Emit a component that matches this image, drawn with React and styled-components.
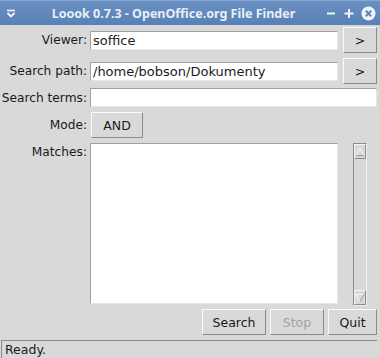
import React from 'react';
import styled, { createGlobalStyle } from 'styled-components';

const Global = createGlobalStyle`
  html, body { margin: 0; padding: 0; background: #d9d9d9; }
  body { font-family: "DejaVu Sans", sans-serif; font-size: 12px; color: #1a1a1a; }
`;

const Window = styled.div`
  width: 380px;
  height: 358px;
  display: flex;
  flex-direction: column;
  background: #d9d9d9;
  overflow: hidden;
`;

const TitleBar = styled.div`
  height: 25px;
  flex: none;
  display: flex;
  align-items: center;
  background: linear-gradient(#6b90c2, #5781b6);
  border-top: 1px solid #87a6d0;
  box-sizing: border-box;
  padding: 0 4px 0 4px;
`;

const Title = styled.div`
  flex: 1;
  text-align: center;
  color: #e9eef6;
  font-family: "Noto Sans", sans-serif;
  font-weight: 700;
  font-size: 12.5px;
  padding-left: 4px;
`;

const TitleIcons = styled.div`
  display: flex;
  align-items: center;
  gap: 6px;
`;

const Body = styled.div`
  flex: 1;
  display: flex;
  flex-direction: column;
  padding: 2px 3px 0 0;
`;

const Row = styled.div`
  display: flex;
  align-items: center;
  height: ${p => p.h}px;
  margin-bottom: ${p => p.mb || 0}px;
`;

const Label = styled.div`
  width: 90px;
  flex: none;
  text-align: right;
  padding-right: 3px;
  box-sizing: border-box;
  font-size: 12.2px;
  white-space: nowrap;
  align-self: ${p => (p.top ? 'flex-start' : 'center')};
  margin-top: ${p => (p.top ? 2 : 0)}px;
`;

const Entry = styled.div`
  flex: 1;
  height: 19px;
  box-sizing: border-box;
  background: #fff;
  border: 1px solid #a0a0a0;
  border-right-color: #e6e6e6;
  border-bottom-color: #e6e6e6;
  padding: 1px 2px;
  font-size: 13px;
  line-height: 16px;
  white-space: nowrap;
  overflow: hidden;
`;

const Button = styled.div`
  flex: none;
  width: ${p => p.w}px;
  height: 26px;
  box-sizing: border-box;
  display: flex;
  align-items: center;
  justify-content: center;
  border: 1px solid #8a8a8a;
  border-top-color: #fafafa;
  border-left-color: #fafafa;
  background: #d9d9d9;
  color: ${p => (p.disabled ? '#a3a3a3' : '#1a1a1a')};
  font-size: 12.5px;
  margin-left: ${p => p.ml || 0}px;
`;

const MatchesRow = styled.div`
  display: flex;
  height: 163px;
  margin-bottom: 3px;
`;

const ListBox = styled.div`
  width: 248px;
  height: 161px;
  box-sizing: border-box;
  background: #fff;
  border: 1px solid #a0a0a0;
  border-right-color: #e6e6e6;
  border-bottom-color: #e6e6e6;
`;

const ScrollBar = styled.div`
  width: 14px;
  height: 163px;
  margin-left: 15px;
  box-sizing: border-box;
  border: 1px solid #8a8a8a;
  border-bottom-color: #f2f2f2;
  border-right-color: #f2f2f2;
  display: flex;
  flex-direction: column;
  justify-content: space-between;
`;

const Arrow = styled.div`
  height: 13px;
  display: flex;
  align-items: center;
  justify-content: center;
  border: 1px solid #f4f4f4;
  border-right-color: #8a8a8a;
  border-bottom-color: #8a8a8a;
`;

const Buttons = styled.div`
  display: flex;
  justify-content: flex-end;
  gap: 4px;
  height: 27px;
`;

const Status = styled.div`
  margin-top: 4px;
  height: 18px;
  box-sizing: border-box;
  border: 1px solid #8a8a8a;
  border-right: none;
  border-bottom: none;
  margin-left: 1px;
  padding: 1px 0 0 3px;
  font-size: 12.5px;
`;

const ArrowUp = () => (
  <svg width="11" height="10" viewBox="0 0 11 10">
    <path d="M5.5 1 L10 9 L1 9 Z" fill="#d9d9d9" stroke="#fafafa" strokeWidth="1" />
    <path d="M1 9 L10 9" stroke="#8a8a8a" />
  </svg>
);

const ArrowDown = () => (
  <svg width="11" height="10" viewBox="0 0 11 10">
    <path d="M1 1 L10 1 L5.5 9 Z" fill="#d9d9d9" stroke="#fafafa" strokeWidth="1" />
    <path d="M10 1 L5.5 9" stroke="#8a8a8a" />
  </svg>
);

export default function App() {
  return (
    <>
      <Global />
      <Window>
        <TitleBar>
          <svg width="14" height="14" viewBox="0 0 14 14">
            <path d="M3 4.5 H11" stroke="#f0f4fa" strokeWidth="1.6" />
            <path d="M3.5 7 L7 10.5 L10.5 7" stroke="#f0f4fa" strokeWidth="1.8" fill="none" />
          </svg>
          <Title>Loook 0.7.3 - OpenOffice.org File Finder</Title>
          <TitleIcons>
            <svg width="12" height="14" viewBox="0 0 12 14">
              <path d="M2 7.5 H10" stroke="#f0f4fa" strokeWidth="2" />
            </svg>
            <svg width="12" height="14" viewBox="0 0 12 14">
              <path d="M1.5 7.5 H10.5 M6 3 V12" stroke="#f0f4fa" strokeWidth="2" />
            </svg>
            <svg width="15" height="15" viewBox="0 0 15 15">
              <circle cx="7.5" cy="7.5" r="7" fill="#f0f4fa" />
              <path d="M4.8 4.8 L10.2 10.2 M10.2 4.8 L4.8 10.2" stroke="#5a83b7" strokeWidth="2" />
            </svg>
          </TitleIcons>
        </TitleBar>
        <Body>
          <Row h={26} mb={5}>
            <Label>Viewer:</Label>
            <Entry>soffice</Entry>
            <Button w={34} ml={5}>&gt;</Button>
          </Row>
          <Row h={26} mb={4}>
            <Label>Search path:</Label>
            <Entry>/home/bobson/Dokumenty</Entry>
            <Button w={34} ml={5}>&gt;</Button>
          </Row>
          <Row h={19} mb={5}>
            <Label>Search terms:</Label>
            <Entry />
          </Row>
          <Row h={26} mb={5}>
            <Label>Mode:</Label>
            <Button w={52} ml={1}>AND</Button>
          </Row>
          <MatchesRow>
            <Label top>Matches:</Label>
            <ListBox />
            <ScrollBar>
              <Arrow><ArrowUp /></Arrow>
              <Arrow><ArrowDown /></Arrow>
            </ScrollBar>
          </MatchesRow>
          <Buttons>
            <Button w={64}>Search</Button>
            <Button w={54} disabled>Stop</Button>
            <Button w={49}>Quit</Button>
          </Buttons>
          <Status>Ready.</Status>
        </Body>
      </Window>
    </>
  );
}
